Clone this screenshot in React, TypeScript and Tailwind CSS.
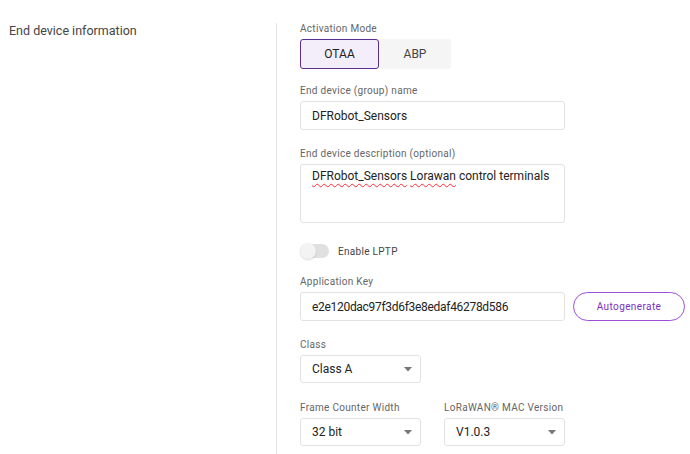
import { useState } from 'react';

const font = { fontFamily: 'Roboto, "Liberation Sans", sans-serif' };

function Label({ children }: { children: React.ReactNode }) {
  return <p className="text-[10px] leading-[12px] text-[#666] mb-[4px] tracking-[0.3px]">{children}</p>;
}

function Select({ value }: { value: string }) {
  return (
    <div className="w-[121px] h-[28px] border border-[#e2e2e2] rounded-[3px] flex items-center justify-between pl-[11px] pr-[8px] text-[12px] text-[#222]">
      <span>{value}</span>
      <svg width="8" height="5" viewBox="0 0 8 5">
        <path d="M0 0h8L4 4.5z" fill="#777" />
      </svg>
    </div>
  );
}

export default function App() {
  const [mode, setMode] = useState<'OTAA' | 'ABP'>('OTAA');
  const [lptp, setLptp] = useState(false);

  return (
    <div className="w-[690px] h-[454px] bg-white flex pt-[23px] overflow-hidden" style={font}>
      {/* Section title */}
      <div className="w-[276px] shrink-0 pl-[9px]">
        <h2 className="text-[12.5px] leading-[16px] text-[#444]">End device information</h2>
      </div>

      {/* Form */}
      <div className="flex-1 border-l border-[#e6e6e6] pl-[23px]">
        <Label>Activation Mode</Label>
        <div className="flex">
          <button
            onClick={() => setMode('OTAA')}
            className={`w-[79px] h-[30px] rounded-[3px] text-[12px] ${
              mode === 'OTAA' ? 'bg-[#f4eefb] border border-[#5c2d91] text-[#222]' : 'bg-[#f5f5f5] text-[#444]'
            }`}
          >
            OTAA
          </button>
          <button
            onClick={() => setMode('ABP')}
            className={`w-[72px] h-[30px] rounded-[3px] text-[12px] ${
              mode === 'ABP' ? 'bg-[#f4eefb] border border-[#5c2d91] text-[#222]' : 'bg-[#f5f5f5] text-[#444]'
            }`}
          >
            ABP
          </button>
        </div>

        <div className="mt-[16px]">
          <Label>End device (group) name</Label>
          <div className="w-[265px] h-[29px] border border-[#e2e2e2] rounded-[3px] flex items-center px-[11px] text-[12px] text-[#222]">
            DFRobot_Sensors
          </div>
        </div>

        <div className="mt-[18px]">
          <Label>End device description (optional)</Label>
          <div className="w-[265px] h-[59px] border border-[#e2e2e2] rounded-[3px] px-[11px] pt-[2px] text-[12px] leading-[18px] text-[#222] whitespace-nowrap">
            <span className="underline decoration-wavy decoration-red-500 decoration-1 underline-offset-[3px]">DFRobot_Sensors</span>{' '}
            <span className="underline decoration-wavy decoration-red-500 decoration-1 underline-offset-[3px]">Lorawan</span> control terminals
          </div>
        </div>

        {/* LPTP toggle */}
        <div className="mt-[21px] flex items-center h-[14px]">
          <button
            onClick={() => setLptp(!lptp)}
            className="relative w-[29px] h-[14px] rounded-full bg-[#e0e0e0]"
          >
            <span
              className={`absolute top-[-1px] w-[16px] h-[16px] rounded-full bg-[#f3f3f3] shadow-[0_1px_2px_rgba(0,0,0,0.15)] ${
                lptp ? 'left-[13px]' : 'left-0'
              }`}
            />
          </button>
          <span className="ml-[9px] text-[10px] text-[#444] tracking-[0.3px]">Enable LPTP</span>
        </div>

        <div className="mt-[18px]">
          <Label>Application Key</Label>
          <div className="flex items-center">
            <div className="w-[265px] h-[29px] border border-[#e2e2e2] rounded-[3px] flex items-center px-[11px] text-[12px] tracking-[-0.3px] text-[#222]">
              e2e120dac97f3d6f3e8edaf46278d586
            </div>
            <button className="ml-[8px] w-[112px] h-[29px] rounded-full border border-[#9b4fd8] text-[10px] text-[#7b2fbe] tracking-[0.4px]">
              Autogenerate
            </button>
          </div>
        </div>

        <div className="mt-[18px]">
          <Label>Class</Label>
          <Select value="Class A" />
        </div>

        <div className="mt-[19px] flex gap-[23px]">
          <div>
            <Label>Frame Counter Width</Label>
            <Select value="32 bit" />
          </div>
          <div>
            <Label>LoRaWAN® MAC Version</Label>
            <Select value="V1.0.3" />
          </div>
        </div>
      </div>
    </div>
  );
}
